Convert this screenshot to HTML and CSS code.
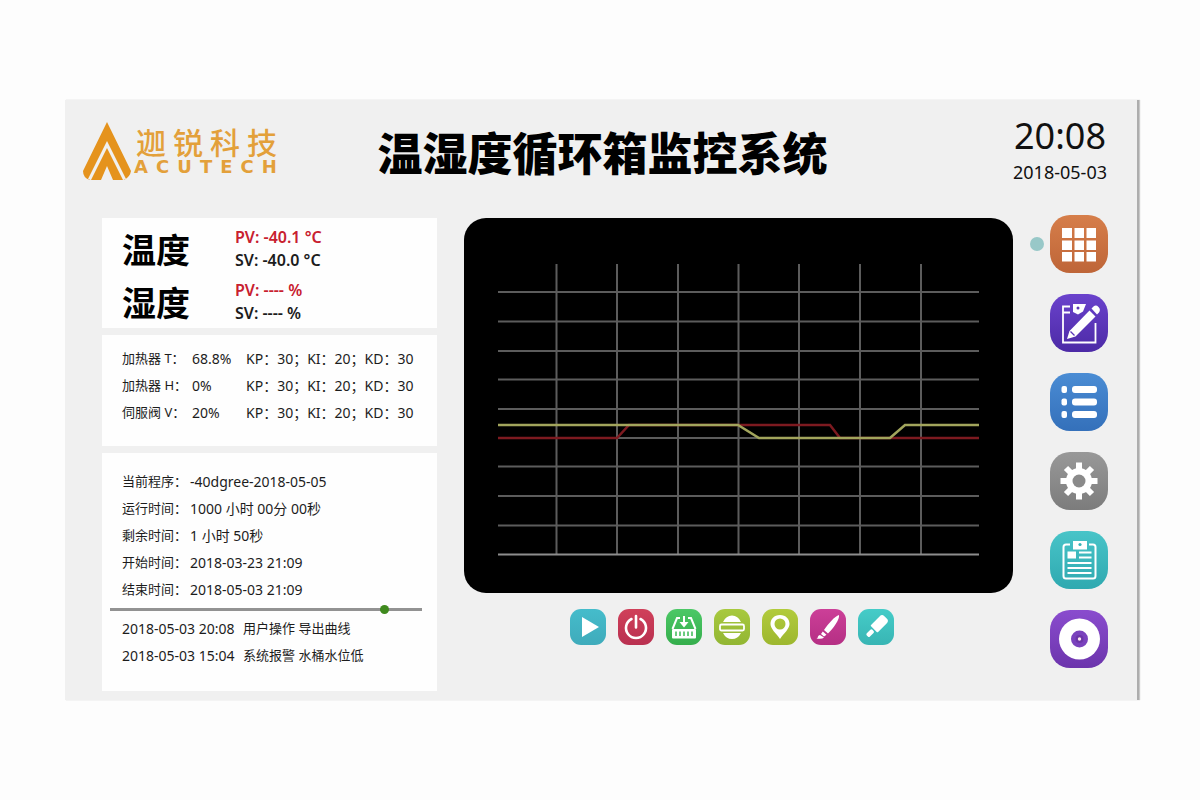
FILE: index.html
```html
<!DOCTYPE html>
<html lang="zh-CN">
<head>
<meta charset="utf-8">
<title>温湿度循环箱监控系统</title>
<link rel="stylesheet" href="styles.css">
</head>
<body>
<div class="screen">
  <header class="header">
    <div class="brand">
      <svg class="brand-mark" viewBox="0 0 50 60" aria-hidden="true">
        <path fill="#e5931d" d="M25 0 L49 49 Q48 55 42 58 L25 23 L8 58 Q1 56 1 49 Z"/>
        <path fill="#f0f0f0" d="M25 19 L44 57 L41 58 L25 26 L9 58 L6 57 Z"/>
        <path fill="#e5931d" d="M25 26 L41 58 H31 L25 44 L19 58 H9 Z"/>
      </svg>
      <div class="brand-text">
        <div class="brand-cn"><span>迦</span><span>锐</span><span>科</span><span>技</span></div>
        <div class="brand-en"><span>A</span><span>C</span><span>U</span><span>T</span><span>E</span><span>C</span><span>H</span></div>
      </div>
    </div>
    <h1 class="title">温湿度循环箱监控系统</h1>
    <div class="clock">
      <div class="clock-time">20:08</div>
      <div class="clock-date">2018-05-03</div>
    </div>
  </header>

  <main class="main">
    <section class="cards">
      <div class="card readings">
        <div class="reading">
          <h2 class="reading-name">温度</h2>
          <div class="reading-values"><div class="pv">PV: -40.1 °C</div><div>SV: -40.0 °C</div></div>
        </div>
        <div class="reading">
          <h2 class="reading-name">湿度</h2>
          <div class="reading-values"><div class="pv">PV: ---- %</div><div>SV: ---- %</div></div>
        </div>
      </div>

      <div class="card heaters">
        <div class="heater"><span class="label">加热器 T：</span><span>68.8%</span><span>KP：30；KI：20；KD：30</span></div>
        <div class="heater"><span class="label">加热器 H：</span><span>0%</span><span>KP：30；KI：20；KD：30</span></div>
        <div class="heater"><span class="label">伺服阀 V：</span><span>20%</span><span>KP：30；KI：20；KD：30</span></div>
      </div>

      <div class="card program">
        <div class="line"><span class="label">当前程序：</span><span>-40dgree-2018-05-05</span></div>
        <div class="line"><span class="label">运行时间：</span><span>1000 小时 00分 00秒</span></div>
        <div class="line"><span class="label">剩余时间：</span><span>1 小时 50秒</span></div>
        <div class="line"><span class="label">开始时间：</span><span>2018-03-23 21:09</span></div>
        <div class="line"><span class="label">结束时间：</span><span>2018-05-03 21:09</span></div>
        <input class="progress" type="range" min="0" max="100" value="89" aria-label="运行进度">
        <div class="log"><span>2018-05-03 20:08</span><span class="label">用户操作 导出曲线</span></div>
        <div class="log"><span>2018-05-03 15:04</span><span class="label">系统报警 水桶水位低</span></div>
      </div>
    </section>

    <section class="center">
      <svg class="chart" viewBox="0 0 549 375" role="img" aria-label="温湿度曲线">
        <rect width="549" height="375" rx="22" fill="#000"/>
        <g stroke="#5c5c5c" stroke-width="2">
          <path d="M92.5 46V336M153 46V336M214 46V336M274.500 46V336M335 46V336M396 46V336M457 46V336"/>
          <path d="M34 74H515M34 103.500H515M34 133H515M34 161.500H515M34 191H515M34 220H515M34 248.500H515M34 278H515M34 307.500H515"/>
        </g>
        <path d="M34 336.500H515" stroke="#8d8d8d" stroke-width="2"/>
        <g fill="none" stroke-width="2">
          <path stroke="#7d1a20" stroke-width="2.500" d="M34 220H153L165 207H366L376 220H515"/>
          <path stroke="#a2a55c" stroke-width="2.500" d="M34 207H274L295 220H426L441 207H515"/>
        </g>
      </svg>

      <nav class="tools" aria-label="工具栏">
        <button class="tool teal" aria-label="运行">
          <svg viewBox="0 0 36 36"><path d="M12 8V28L29 18Z" fill="#fff"/></svg>
        </button>
        <button class="tool red" aria-label="停止">
          <svg viewBox="0 0 36 36"><path d="M13.500 10A10 10 0 1 0 22.500 10M18 7V18.500" fill="none" stroke="#fff" stroke-width="2.600" stroke-linecap="round"/></svg>
        </button>
        <button class="tool green" aria-label="导出">
          <svg viewBox="0 0 36 36">
            <path d="M14 9H11L6.500 20M22 9H25L29.500 20M18 7V15" fill="none" stroke="#fff" stroke-width="2"/>
            <path d="M13.500 13H22.500L18 18.500Z" fill="#fff"/>
            <rect x="6" y="20" width="24" height="9.500" rx="1" fill="#fff"/>
            <path d="M10 22.500V27M14 22.500V27M18 22.500V27M22 22.500V27M26 22.500V27" stroke="#3dbb55" stroke-width="1.500"/>
          </svg>
        </button>
        <button class="tool lime" aria-label="步骤">
          <svg viewBox="0 0 36 36">
            <path d="M9 13Q12 6.500 18 6.500T27 13ZM9 24H27Q24 30 18 30T9 24Z" fill="#fff"/>
            <rect x="6" y="15.500" width="24" height="6" rx="1.500" fill="none" stroke="#fff" stroke-width="1.800"/>
          </svg>
        </button>
        <button class="tool olive" aria-label="定位">
          <svg viewBox="0 0 36 36"><path d="M18 6C12 6 8.500 10 8.500 15C8.500 20 14 24 18 30C22 24 27.500 20 27.500 15C27.500 10 24 6 18 6ZM18 9.500A5.500 5.500 0 1 1 18 20.500A5.500 5.500 0 1 1 18 9.500Z" fill="#fff" fill-rule="evenodd"/></svg>
        </button>
        <button class="tool pink" aria-label="画笔">
          <svg viewBox="0 0 36 36"><path d="M29 6C30 10 23 20 18 24.500L14 21C18 15 25 7 29 6ZM12.800 22.500L16.500 25.800L14 27.500L11 25ZM10 26L14 28.500Q12 30.500 6.500 29.500Q8 29 8 27.500Q8.500 26 10 26Z" fill="#fff"/></svg>
        </button>
        <button class="tool aqua" aria-label="标记">
          <svg viewBox="0 0 36 36"><g transform="rotate(45 18 18)" fill="#fff"><path d="M13 8Q13 4.500 16 4.500H20Q23 4.500 23 8V20Q23 21 22 21H14Q13 21 13 20Z"/><rect x="16" y="22.500" width="4.500" height="8" rx="1.500"/></g></svg>
        </button>
      </nav>
    </section>

    <nav class="side" aria-label="主菜单">
      <button class="menu orange current" aria-label="主页">
        <svg viewBox="0 0 58 58"><g fill="#fff"><path d="M12 13h10v10H12zM24.500 13h9.500v10h-9.500zM36.500 13h9.500v10h-9.500zM12 25.500h10v9.500H12zM24.500 25.500h9.500v9.500h-9.500zM36.500 25.500h9.500v9.500h-9.500zM12 37h10v9.500H12zM24.500 37h9.500v9.500h-9.500zM36.500 37h9.500v9.500h-9.500z"/></g></svg>
      </button>
      <button class="menu violet" aria-label="编辑">
        <svg viewBox="0 0 58 58">
          <path d="M20 12.500H13V48.500H45.500V29M13 18.500H20" fill="none" stroke="#fff" stroke-width="1.800"/>
          <path d="M23 10H36L33 17.500L28 20.500L23 18Z" fill="#fff"/><circle cx="28" cy="14" r="1.500" fill="#5a35b8"/>
          <path d="M17 45L19.500 37L39.500 16.500L45.500 22.500L25.500 42.500ZM41.500 14.500L43.500 12.500Q46 10.500 48.500 13T49 18.500L47 20.500Z" fill="#fff"/>
          <path d="M20.500 37.500L24.500 41.500" stroke="#5a35b8" stroke-width="1.200"/>
        </svg>
      </button>
      <button class="menu blue" aria-label="列表">
        <svg viewBox="0 0 58 58"><g fill="#fff"><rect x="11.500" y="13" width="5.500" height="7" rx="2"/><rect x="11.500" y="25.500" width="5.500" height="7" rx="2"/><rect x="11.500" y="38" width="5.500" height="7" rx="2"/><rect x="22" y="13" width="25" height="7" rx="3"/><rect x="22" y="25.500" width="25" height="7" rx="3"/><rect x="22" y="38" width="25" height="7" rx="3"/></g></svg>
      </button>
      <button class="menu gray" aria-label="设置">
        <svg viewBox="0 0 58 58">
          <path d="M29 10.500V47.500M10.500 29H47.500M16 16L42 42M42 16L16 42" stroke="#fff" stroke-width="6" stroke-linecap="square" stroke-dasharray="none" class="teeth"/>
          <circle cx="29" cy="29" r="13" fill="#fff"/><circle cx="29" cy="29" r="6.500" fill="#8a8a8a"/>
        </svg>
      </button>
      <button class="menu cyan" aria-label="报表">
        <svg viewBox="0 0 58 58">
          <path d="M20 13.500H16Q13.500 13.500 13.500 16V45Q13.500 47.500 16 47.500H43Q45.500 47.500 45.500 45V16Q45.500 13.500 43 13.500H39" fill="none" stroke="#fff" stroke-width="2"/>
          <path d="M23 10H37V18.500H23ZM17.500 20.500H26V27.500H17.500Z" fill="#fff"/>
          <circle cx="30" cy="13.500" r="1.600" fill="#37b3b8"/>
          <path d="M29 21.500H41.500M29 26.500H41.500M17.500 32H41.500M17.500 37H41.500M17.500 42H41.500" stroke="#fff" stroke-width="2"/>
        </svg>
      </button>
      <button class="menu purple" aria-label="记录">
        <svg viewBox="0 0 58 58"><circle cx="29.500" cy="29" r="20.500" fill="#fff"/><circle cx="29.500" cy="29" r="8.500" fill="#7a42bd"/><circle cx="29.500" cy="29" r="4" fill="#6c35a8"/><circle cx="29.500" cy="29" r="1.700" fill="#fbe6ef"/></svg>
      </button>
    </nav>
  </main>
</div>
</body>
</html>
```
FILE: styles.css
```css
* {
  box-sizing: border-box;
}

body {
  margin: 0;
  background: #fdfdfd;
  color: #1c1c1c;
  font-family: "Noto Sans", "Noto Sans CJK SC", sans-serif;
  font-size: 14px;
  line-height: 27px;
}

h1,
h2 {
  margin: 0;
}

button {
  display: block;
  padding: 0;
  border: 0;
  cursor: pointer;
}

.screen {
  margin: 100px 61px 100px 65px;
  background: #f0f0f0;
  border-right: 2px solid #adadad;
  box-shadow: 1px 0 1px #c8c8c8;
}

.header {
  display: grid;
  grid-template-columns: 1fr auto 1fr;
  align-items: start;
  height: 115px;
  padding: 18px 30px 0 17px;
}

.brand {
  display: flex;
  align-items: flex-start;
  gap: 2px;
  padding-top: 4px;
  color: #e3a03a;
}

.brand-mark {
  width: 50px;
  height: 60px;
}

.brand-text {
  width: 143px;
  padding-top: 5px;
}

.brand-cn,
.brand-en {
  display: flex;
  justify-content: space-between;
}

.brand-cn {
  padding-left: 2px;
  font-size: 30px;
  font-weight: 500;
  line-height: 32px;
}

.brand-en {
  font-family: "DejaVu Sans", sans-serif;
  font-size: 18px;
  font-weight: 700;
  line-height: 16px;
}

.title {
  padding-left: 16px;
  color: #000;
  font-family: "Noto Sans CJK SC", sans-serif;
  font-size: 45px;
  font-weight: 900;
  line-height: 68px;
}

.clock {
  justify-self: end;
  text-align: center;
  color: #111;
}

.clock-time {
  font-size: 36px;
  line-height: 36px;
}

.clock-date {
  font-size: 18px;
  line-height: 36px;
}

.main {
  display: grid;
  grid-template-columns: 335fr 613fr 58px;
  align-items: start;
  padding: 0 29px 9px 37px;
}

.cards {
  display: flex;
  flex-direction: column;
  gap: 7px;
  margin-top: 3px;
}

.card {
  background: #fefefe;
  padding: 0 20px;
}

.card.readings {
  padding-top: 4px;
}

.reading {
  display: grid;
  grid-template-columns: 113px 1fr;
  align-items: center;
  height: 53px;
}

.reading-name {
  color: #000;
  font-family: "Noto Sans CJK SC", sans-serif;
  font-size: 34px;
  line-height: 53px;
}

.reading-values {
  font-size: 16px;
  font-weight: 600;
  line-height: 23px;
}

.pv {
  color: #c8202f;
}

.card.heaters {
  padding-top: 10px;
  padding-bottom: 20px;
}

.heater,
.line,
.log {
  display: grid;
  white-space: nowrap;
}

.heater {
  grid-template-columns: 70px 54px 1fr;
}

.line {
  grid-template-columns: 68px 1fr;
}

.log {
  grid-template-columns: 121px 1fr;
}

.label {
  font-size: 13px;
}

.card.program {
  padding-top: 15px;
  padding-bottom: 22px;
}

.progress {
  display: block;
  width: calc(100% + 17px);
  height: 12px;
  margin: 0 0 0 -12px;
  appearance: none;
  background: linear-gradient(#929292, #929292) center / 100% 3px no-repeat;
}

.progress::-webkit-slider-thumb {
  appearance: none;
  width: 9px;
  height: 9px;
  border-radius: 50%;
  background: #3f8a1e;
}

.center {
  margin: 3px 37px 0 27px;
}

.chart {
  display: block;
  width: 100%;
}

.tools {
  display: flex;
  justify-content: center;
  gap: 12px;
  padding: 16px 14px 0 0;
}

.tool {
  width: 36px;
  height: 36px;
  border-radius: 11px;
}

.tool svg,
.menu svg {
  display: block;
  width: 100%;
}

.teeth {
  stroke-linecap: butt;
}

.teal { background: linear-gradient(#45bccb, #3fabbb); }
.red { background: linear-gradient(#d0405a, #b93050); }
.green { background: linear-gradient(#4cc866, #35ae4c); }
.lime { background: linear-gradient(#a8c93e, #92b633); }
.olive { background: linear-gradient(#b2cb3c, #9db72f); }
.pink { background: linear-gradient(#cc3f98, #b52f84); }
.aqua { background: linear-gradient(#45ccc8, #38b5b4); }

.side {
  display: flex;
  flex-direction: column;
  gap: 21px;
}

.menu {
  position: relative;
  width: 58px;
  height: 58px;
  border-radius: 20px;
}

.current::before {
  content: "";
  position: absolute;
  top: 22px;
  left: -20px;
  width: 14px;
  height: 14px;
  border-radius: 50%;
  background: #98c8c8;
}

.orange { background: linear-gradient(#d67e4a, #be6538); }
.violet { background: linear-gradient(#6a42cc, #4c2aa6); }
.blue { background: linear-gradient(#4a8cd4, #3470ba); }
.gray { background: linear-gradient(#989898, #7c7c7c); }
.cyan { background: linear-gradient(#48c4c8, #2fa9b0); }
.purple { background: linear-gradient(#8a4cce, #6c34ac); }
```
